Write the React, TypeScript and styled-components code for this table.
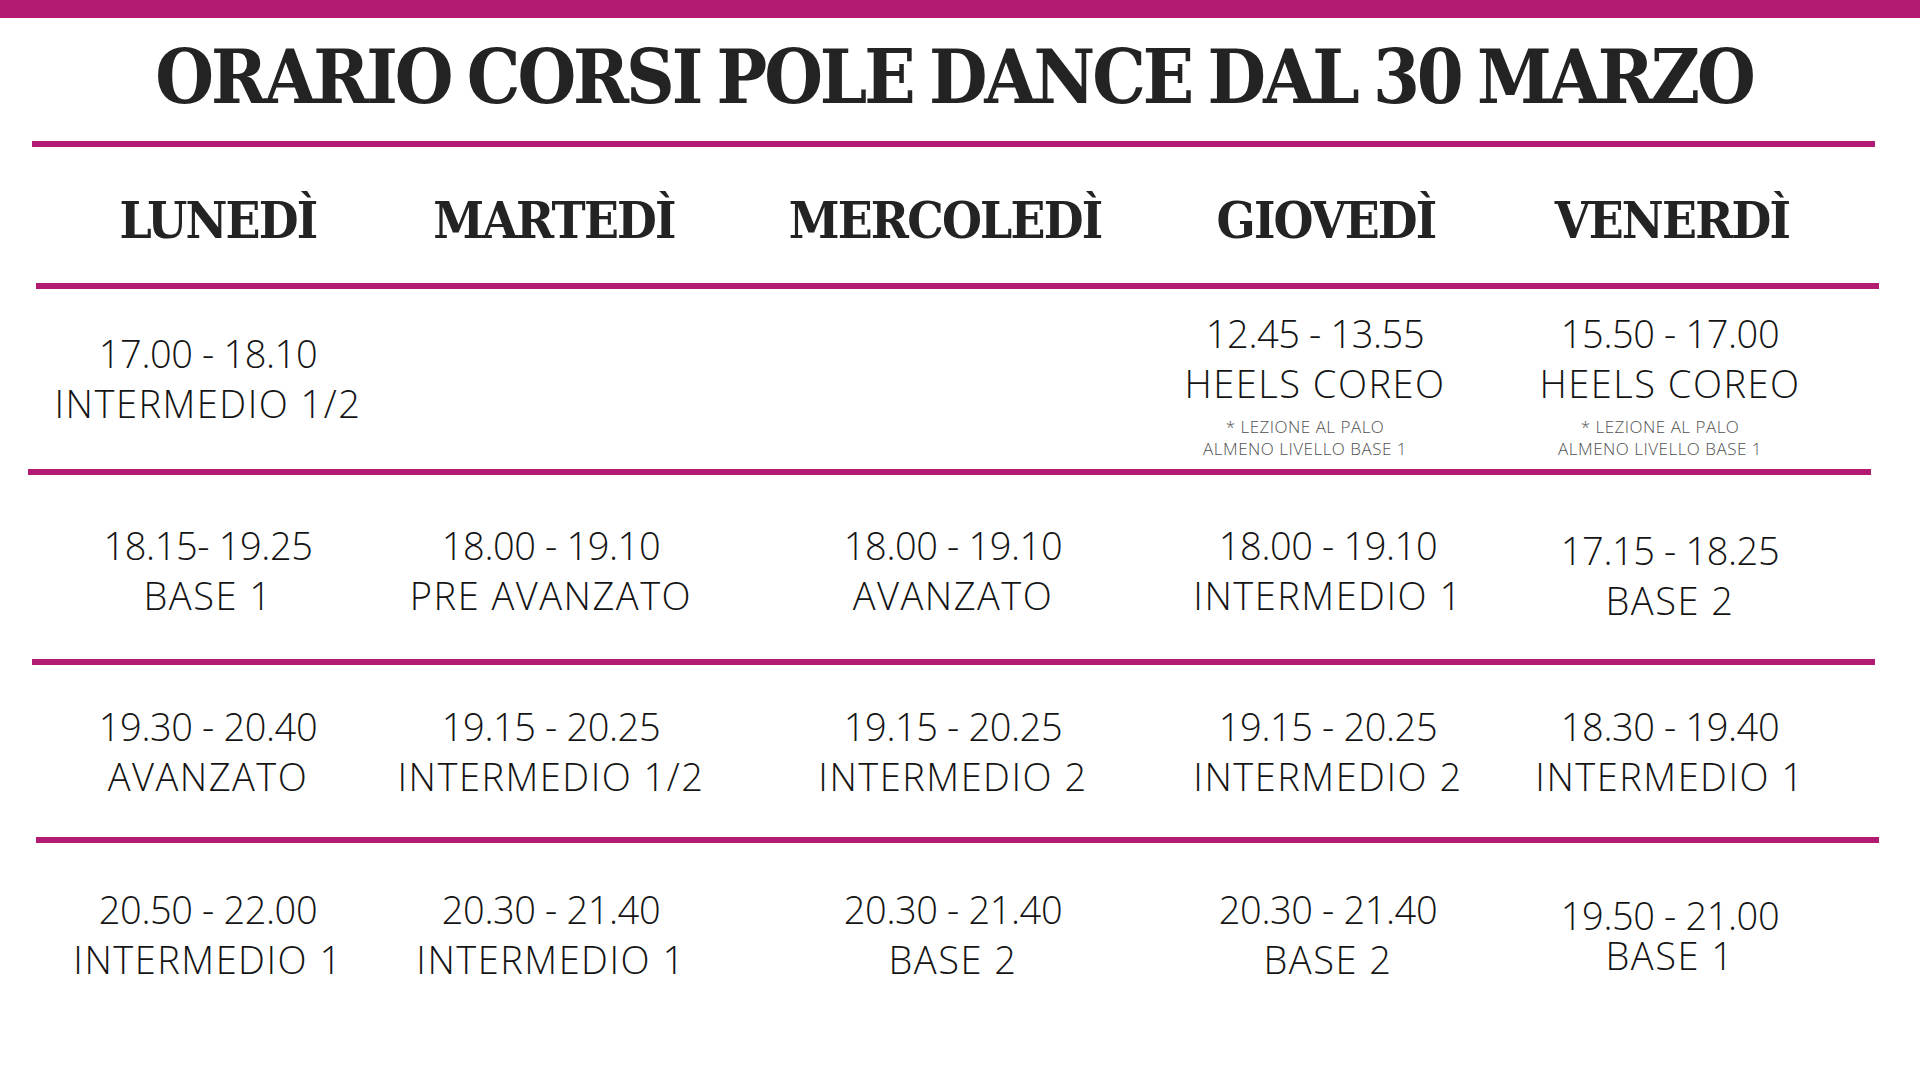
import React from "react";
import styled, { createGlobalStyle } from "styled-components";

const MAGENTA = "#b31a71";

const GlobalStyle = createGlobalStyle`
  html, body { margin: 0; padding: 0; background: #ffffff; }
  body { font-family: "Open Sans", "Liberation Sans", sans-serif; }
`;

const Page = styled.div`
  width: 1920px;
  height: 1080px;
  overflow: hidden;
  background: #ffffff;
  display: flex;
  flex-direction: column;
`;

const TopBar = styled.div`
  height: 18px;
  background: ${MAGENTA};
  flex: none;
`;

const Title = styled.h1`
  margin: 0;
  padding: 22px 12px 26px 0;
  font-family: "DejaVu Serif Condensed", "DejaVu Serif", serif;
  font-weight: 700;
  font-size: 75px;
  line-height: 75px;
  color: #232323;
  text-align: center;
  white-space: nowrap;
  letter-spacing: -3.1px;
  word-spacing: -4px;
`;

const Rule = styled.div<{ $left: number }>`
  height: 6px;
  width: 1843px;
  margin-left: ${(p) => p.$left}px;
  background: ${MAGENTA};
  flex: none;
`;

const HeaderRow = styled.div`
  height: 136px;
  box-sizing: border-box;
  padding: 48px 0 0 60px;
  display: grid;
  grid-template-columns: 316px 356px 426px 336px 356px;
  align-items: start;
`;

const DayName = styled.div`
  font-family: "DejaVu Serif Condensed", "DejaVu Serif", serif;
  font-weight: 700;
  font-size: 51px;
  line-height: 51px;
  color: #232323;
  text-align: center;
  white-space: nowrap;
  letter-spacing: -1.8px;
`;

const Row = styled.div<{ $h: number }>`
  height: ${(p) => p.$h}px;
  padding-left: 40px;
  display: grid;
  grid-template-columns: 336px 350px 454px 296px 388px;
  align-items: center;
  flex: none;
`;

const Cell = styled.div<{ $nudge?: number; $shift?: number; $tight?: boolean }>`
  display: flex;
  flex-direction: column;
  align-items: center;
  margin-top: ${(p) => 5 + (p.$nudge ?? 0)}px;
  margin-right: ${(p) => p.$shift ?? 0}px;
  font-family: "Open Sans", "Liberation Sans", sans-serif;
  font-weight: 300;
  font-size: 38px;
  line-height: ${(p) => (p.$tight ? 40 : 50)}px;
  color: #141414;
  white-space: nowrap;
`;

const Time = styled.div`
  letter-spacing: -0.4px;
`;

const Level = styled.div`
  letter-spacing: 1.5px;
`;

const Note = styled.div`
  margin-top: 8px;
  margin-right: 20px;
  font-size: 17px;
  line-height: 22px;
  color: #505050;
  text-align: center;
  letter-spacing: 0.5px;
`;

type Slot = {
  time: string;
  level: string;
  note?: string[];
  nudge?: number;
  shift?: number;
  tight?: boolean;
} | null;

const days = ["LUNEDÌ", "MARTEDÌ", "MERCOLEDÌ", "GIOVEDÌ", "VENERDÌ"];

const rows: { h: number; slots: Slot[] }[] = [
  {
    h: 180,
    slots: [
      { time: "17.00 - 18.10", level: "INTERMEDIO 1/2", nudge: -7 },
      null,
      null,
      {
        time: "12.45 - 13.55",
        level: "HEELS COREO",
        note: ["* LEZIONE AL PALO", "ALMENO LIVELLO BASE 1"],
        nudge: 4,
        shift: 26,
      },
      {
        time: "15.50 - 17.00",
        level: "HEELS COREO",
        note: ["* LEZIONE AL PALO", "ALMENO LIVELLO BASE 1"],
        nudge: 4,
      },
    ],
  },
  {
    h: 184,
    slots: [
      { time: "18.15- 19.25", level: "BASE 1" },
      { time: "18.00 - 19.10", level: "PRE AVANZATO" },
      { time: "18.00 - 19.10", level: "AVANZATO" },
      { time: "18.00 - 19.10", level: "INTERMEDIO 1" },
      { time: "17.15 - 18.25", level: "BASE 2", nudge: 10 },
    ],
  },
  {
    h: 172,
    slots: [
      { time: "19.30 - 20.40", level: "AVANZATO", nudge: -6 },
      { time: "19.15 - 20.25", level: "INTERMEDIO 1/2", nudge: -6 },
      { time: "19.15 - 20.25", level: "INTERMEDIO 2", nudge: -6 },
      { time: "19.15 - 20.25", level: "INTERMEDIO 2", nudge: -6 },
      { time: "18.30 - 19.40", level: "INTERMEDIO 1", nudge: -6 },
    ],
  },
  {
    h: 183,
    slots: [
      { time: "20.50 - 22.00", level: "INTERMEDIO 1", nudge: -6 },
      { time: "20.30 - 21.40", level: "INTERMEDIO 1", nudge: -6 },
      { time: "20.30 - 21.40", level: "BASE 2", nudge: -6 },
      { time: "20.30 - 21.40", level: "BASE 2", nudge: -6 },
      { time: "19.50 - 21.00", level: "BASE 1", tight: true, nudge: -5 },
    ],
  },
];

const ruleLefts = [28, 32, 36];

export default function App() {
  return (
    <>
      <GlobalStyle />
      <Page>
        <TopBar />
        <Title>ORARIO CORSI POLE DANCE DAL 30 MARZO</Title>
        <Rule $left={32} />
        <HeaderRow>
          {days.map((d) => (
            <DayName key={d}>{d}</DayName>
          ))}
        </HeaderRow>
        <Rule $left={36} />
        {rows.map((r, ri) => (
          <React.Fragment key={ri}>
            <Row $h={r.h}>
              {r.slots.map((s, si) =>
                s ? (
                  <Cell key={si} $nudge={s.nudge} $shift={s.shift} $tight={s.tight}>
                    <Time>{s.time}</Time>
                    <Level>{s.level}</Level>
                    {s.note && (
                      <Note>
                        {s.note.map((n) => (
                          <div key={n}>{n}</div>
                        ))}
                      </Note>
                    )}
                  </Cell>
                ) : (
                  <div key={si} />
                )
              )}
            </Row>
            {ri < rows.length - 1 && <Rule $left={ruleLefts[ri % 3]} />}
          </React.Fragment>
        ))}
      </Page>
    </>
  );
}
